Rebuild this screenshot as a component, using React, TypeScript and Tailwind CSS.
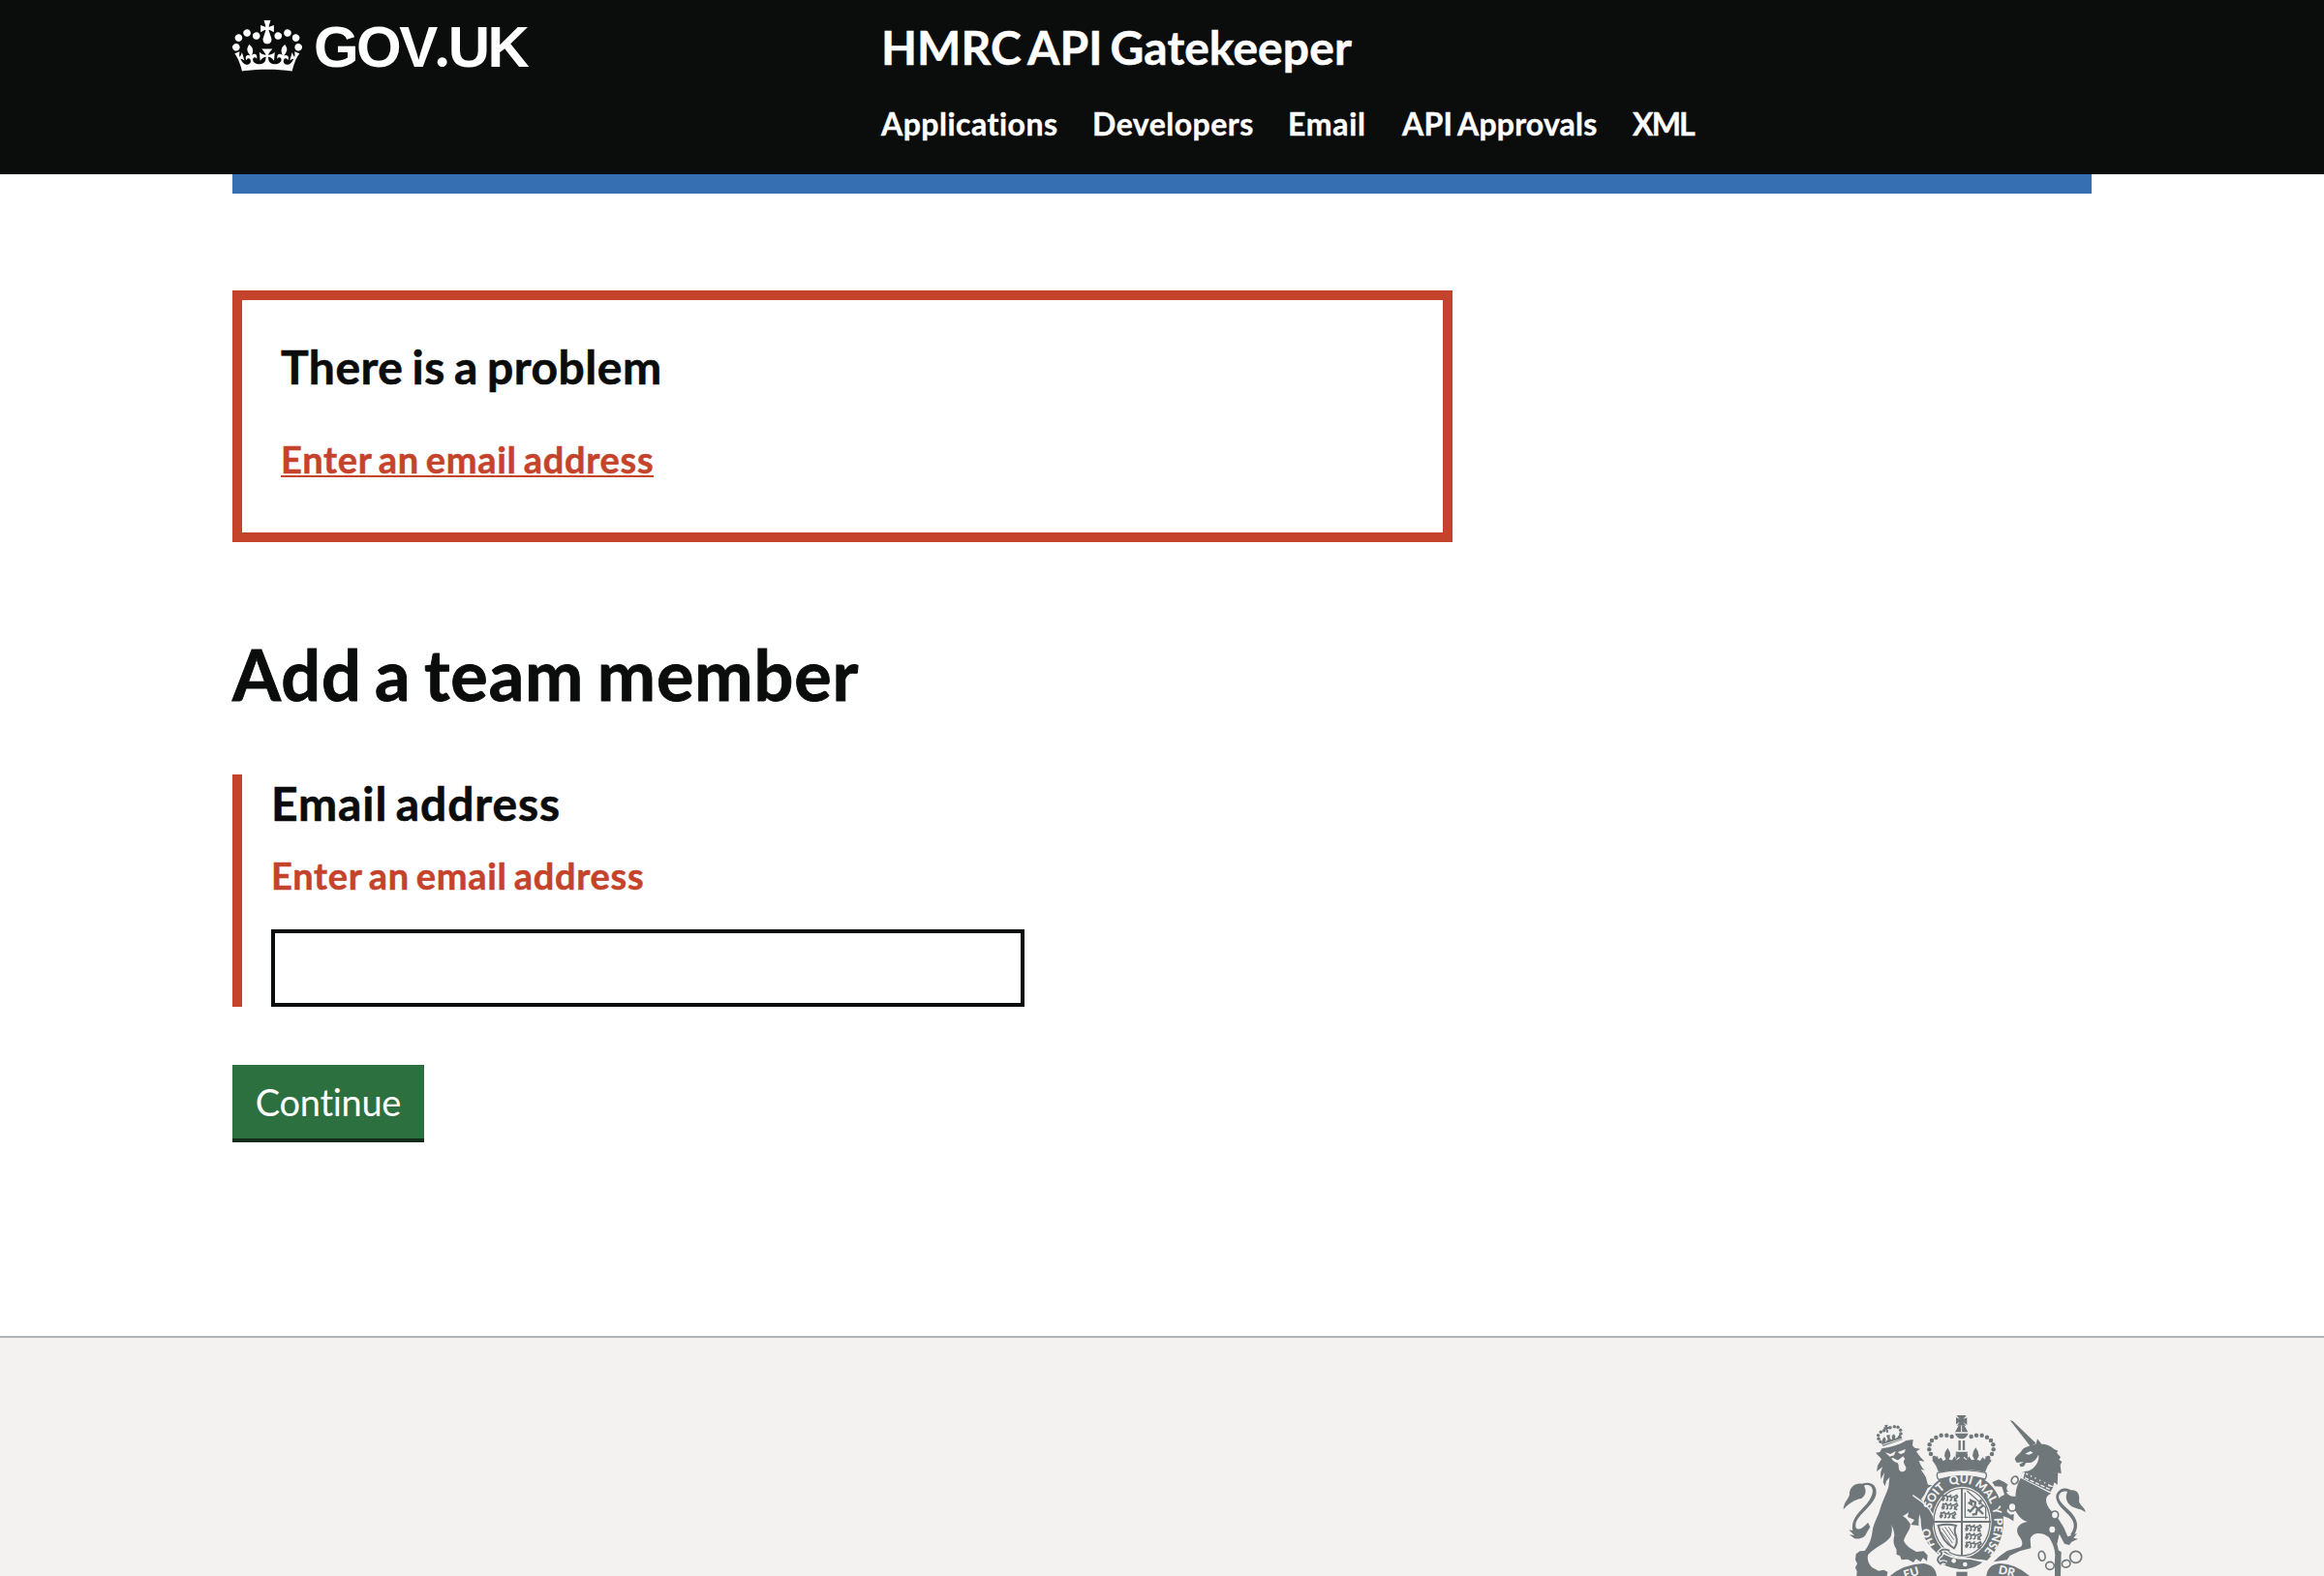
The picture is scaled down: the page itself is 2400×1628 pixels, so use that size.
const navItems = [
  { label: 'Applications', box: 'w-[218px] tracking-[0.5px]' },
  { label: 'Developers', box: 'w-[202px] tracking-[0.5px]' },
  { label: 'Email', box: 'w-[118px] tracking-[0.7px]' },
  { label: 'API Approvals', box: 'w-[238px] tracking-[0.2px] [word-spacing:-2px]' },
  { label: 'XML', box: 'tracking-[-1.8px]' },
];

function Crown({ className }: { className?: string }) {
  return (
    <svg className={className} viewBox="0 0 132 97" fill="currentColor" aria-hidden="true">
      <path d="M25 30.2c3.5 1.5 7.7-.2 9.1-3.7 1.5-3.6-.2-7.8-3.9-9.2-3.6-1.4-7.6.3-9.1 3.9-1.4 3.5.3 7.5 3.9 9zM9 39.5c3.6 1.5 7.8-.2 9.2-3.7 1.5-3.6-.2-7.8-3.9-9.1-3.6-1.5-7.6.2-9.1 3.8-1.4 3.5.3 7.5 3.8 9zM4.4 57.2c3.5 1.5 7.7-.2 9.1-3.8 1.5-3.6-.2-7.7-3.9-9.1-3.5-1.5-7.6.3-9.1 3.8-1.4 3.5.3 7.6 3.9 9.1zm38.3-21.4c3.5 1.5 7.7-.2 9.1-3.8 1.5-3.6-.2-7.7-3.9-9.1-3.6-1.5-7.6.3-9.1 3.8-1.3 3.6.4 7.7 3.9 9.1zm64.4-5.6c-3.6 1.5-7.8-.2-9.1-3.7-1.5-3.6.2-7.8 3.8-9.2 3.6-1.4 7.7.3 9.2 3.9 1.3 3.5-.4 7.5-3.9 9zm15.9 9.3c-3.6 1.5-7.7-.2-9.1-3.7-1.5-3.6.2-7.8 3.7-9.1 3.6-1.5 7.7.2 9.2 3.8 1.5 3.5-.3 7.5-3.8 9zm4.7 17.7c-3.6 1.5-7.8-.2-9.2-3.8-1.5-3.6.2-7.7 3.9-9.1 3.6-1.5 7.7.3 9.2 3.8 1.3 3.5-.4 7.6-3.9 9.1zM89.3 35.8c-3.6 1.5-7.8-.2-9.2-3.8-1.4-3.6.2-7.7 3.9-9.1 3.6-1.5 7.7.3 9.2 3.8 1.4 3.6-.3 7.7-3.9 9.1zM69.7 17.7l8.9 4.7V9.3l-8.9 2.8c-.2-.3-.5-.6-.9-.9L72.4 0H59.6l3.5 11.2c-.3.3-.6.5-.9.9l-8.8-2.8v13.1l8.8-4.7c.3.3.6.7.9.9l-5 15.4v.1c-.2.8-.4 1.6-.4 2.4 0 4.1 3.1 7.5 7 8.1h.2c.3 0 .7.1 1 .1.4 0 .7 0 1-.1h.2c4-.6 7.1-4.1 7.1-8.1 0-.8-.1-1.7-.4-2.4V34l-5.1-15.4c.4-.2.7-.6 1-.9zM66 92.8c16.9 0 32.8 1.1 47.1 3.2 4-16.9 8.9-26.7 14-33.5l-9.6-3.4c1 4.9 1.1 7.2 0 10.2-1.5-1.4-3-4.3-4.2-8.7L108.6 76c2.8-2 5-3.2 7.5-3.3-4.4 9.4-10 11.9-13.6 11.2-4.3-.8-6.3-4.6-5.6-7.9 1-4.7 5.7-5.9 8-.5 4.3-8.7-3-11.4-7.6-8.8 7.1-7.2 7.9-13.5 2.1-21.1-8 6.1-8.1 12.3-4.5 20.8-4.7-5.4-12.1-2.5-9.5 6.2 3.4-5.2 7.9-2 7.2 3.1-.6 4.3-6.4 7.8-13.5 7.2-10.3-.9-10.9-8-11.2-13.8 2.5-.5 7.1 1.8 11 7.3L80.2 60c-4.1 4.4-8 5.3-12.3 5.4 1.4-4.4 8-11.6 8-11.6H55.5s6.4 7.2 7.9 11.6c-4.2-.1-8-1-12.3-5.4l1.4 16.4c3.9-5.5 8.5-7.7 10.9-7.3-.3 5.8-.9 12.8-11.1 13.8-7.2.6-12.9-2.9-13.5-7.2-.7-5 3.8-8.3 7.1-3.1 2.7-8.7-4.6-11.6-9.4-6.2 3.7-8.5 3.6-14.7-4.6-20.8-5.8 7.6-5 13.9 2.2 21.1-4.7-2.6-11.9.1-7.7 8.8 2.3-5.5 7.1-4.2 8.1.5.7 3.3-1.3 7.1-5.7 7.9-3.5.7-9-1.8-13.5-11.2 2.5.1 4.7 1.3 7.5 3.3l-4.7-15.4c-1.2 4.4-2.7 7.2-4.3 8.7-1.1-3-.9-5.3 0-10.2l-9.5 3.4c5 6.9 9.9 16.7 14 33.5 14.8-2.1 30.8-3.2 47.7-3.2z" />
    </svg>
  );
}

const INK = '#6f777b';
const PAPER = '#f3f2f1';

// Small heraldic lion used in the shield's quarters.
function Charge({ x, y }: { x: number; y: number }) {
  return (
    <path
      transform={`translate(${x} ${y})`}
      d="M2 16c5-3 6-8 3-13M5 3l7 2 4-3 3 5 8-1 7 3 9-3 6-4 3 6-5 4-2 8 6 1M12 10l-4 8-5 1M20 9l1 9-5 2M34 10l-2 8-5 2M42 10l2 8-4 2M26 8l6-7"
      fill="none"
      stroke={INK}
      strokeWidth="5"
      strokeLinejoin="round"
    />
  );
}

function CoatOfArms({ className }: { className?: string }) {
  const beads: [number, number][] = [
    [377, 132], [361, 128], [344, 128], [328, 135], [315, 144], [308, 157], [307, 172], [312, 186], [323, 198],
    [437, 132], [453, 128], [470, 128], [486, 134], [498, 144], [505, 157], [506, 172], [501, 186], [490, 198],
  ];
  const smallBeads: [number, number][] = [
    [149, 128], [150, 139], [156, 148], [157, 118], [167, 113], [186, 104], [199, 101], [210, 103], [218, 112], [219, 123], [216, 134],
  ];
  return (
    <svg className={className} viewBox="0 0 840 564" fill={INK} aria-hidden="true">
      {/* lion tail */}
      <path d="M98 278C130 268 147 285 142 312C136 345 82 375 79 405C77 424 94 425 117 398L124 412L112 432C108 444 92 452 74 447L60 436L75 438L58 421L70 423C64 385 92 365 115 338C136 312 137 289 120 283C113 281 106 283 105 285C115 300 108 318 96 324C75 328 56 340 41 358C43 335 56 326 60 312C58 295 72 275 98 278Z" />
      {/* lion body */}
      <path d="M141 182L154 180L160 169C190 164 215 157 236 144L257 141L255 160L262 167L279 170L267 178C275 190 282 200 293 209L275 206C279 218 284 228 293 236L281 233C288 246 298 255 299 268L303 281L316 283L302 292L292 312L282 326L300 350L317 376L322 397L318 419L308 406L300 425L292 411L278 428L275 408L250 405L261 390L240 381L243 367L226 378L208 370C224 376 238 385 248 402C251 419 233 435 228 455C236 472 252 480 268 489L290 487L302 500L300 518L288 508L280 520L266 511L258 522L240 512L221 514L216 501L206 498L205 480C195 466 195 452 199 438C199 428 195 417 190 404C193 420 191 433 187 443C170 465 137 475 118 497C112 513 121 527 129 537L150 548L166 545L178 551L176 564H82L83 550L78 538L84 526L78 514L80 496L92 487L107 486C121 468 128 449 131 425C134 402 146 384 153 363C160 335 172 316 181 288L184 258L174 270L170 286L164 274L168 244L157 264L156 245L162 226L144 240L147 222L159 202L154 196Z" />
      <path d="M170 181L187 186L203 177L198 190L185 194ZM209 180L233 171L231 181L219 187ZM190 199C198 195 203 207 212 204L226 193L232 202C223 209 230 217 235 227C236 237 228 243 219 240C209 234 215 223 210 215C205 210 196 213 190 199Z" fill={PAPER} />
      {/* lion crown */}
      <g>
        {smallBeads.map(([x, y]) => <circle key={`${x}-${y}`} cx={x} cy={y} r="5.2" />)}
        <path d="M168 97L179 95L177 102L184 101L184 109L178 108L181 119L174 119L173 110L167 111L166 103L171 103Z" />
        <path d="M154 145L162 152L162 140L168 132L173 141L171 149L179 141L174 128L185 126L185 138L192 142L191 130L198 124L202 131L201 139L208 135L216 123L224 141L164 162Z" />
        <path d="M163 157Q190 149 224 138" fill="none" stroke={PAPER} strokeWidth="2.5" />
      </g>

      {/* royal crown */}
      <g>
        <path d="M392 66H422L413 78L424 73V96L413 87L421 98H393L401 87L390 94V72L401 78Z" />
        <path d="M398 98H416L427 118H387Z" />
        <path d="M387 122H428Q422 138 408 139Q392 138 387 122Z" />
        <path d="M407 98V118" stroke={PAPER} strokeWidth="3" />
        <path d="M401 144V174M414 144V174" stroke={INK} strokeWidth="7" />
        {beads.map(([x, y]) => <circle key={`${x}-${y}`} cx={x} cy={y} r="6.7" />)}
        <path d="M316 205L333 192L335 202L344 197L350 208L359 202L354 192Q354 179 364 167Q373 179 373 191L368 203L378 205L385 193L392 205L402 198L388 179H427L413 198L423 205L430 193L438 205L447 203L441 191Q441 178 451 166Q461 179 461 191L455 203L465 207L472 196L480 203L482 192L500 206Q486 221 480 242Q408 227 336 242Q330 222 316 205Z" />
        <path d="M389 183L402 193L389 204ZM426 183L413 193L426 204Z" />
        <path d="M333 244Q408 228 482 244Q487 254 480 264Q408 244 336 265Q328 256 333 244Z" fill={PAPER} stroke={INK} strokeWidth="4" />
      </g>

      {/* garter */}
      <ellipse cx="408" cy="402" rx="134" ry="150" fill={PAPER} />
      <path d="M340 264Q408 240 476 264Q536 305 537 392Q537 466 486 516Q452 508 430 516L340 500Q280 455 281 390Q284 305 340 264Z" />
      <ellipse cx="408" cy="397" rx="92" ry="110" fill={PAPER} />
      <ellipse cx="408" cy="397" rx="87" ry="104" fill="none" stroke={INK} strokeWidth="4" />
      <path d="M408 292V500M318 396H498" stroke={INK} strokeWidth="6" />
      <Charge x={343} y={311} />
      <Charge x={343} y={337} />
      <Charge x={337} y={364} />
      <Charge x={416} y={404} />
      <Charge x={416} y={430} />
      <Charge x={416} y={456} />
      <path d="M418 305V382H488M424 300L482 352V388" fill="none" stroke={INK} strokeWidth="4" />
      <path d="M428 336L438 342L436 330L450 336L448 348L460 356L474 345M448 348L434 364L426 358M456 356L452 372L440 374M460 358L474 372M462 342L468 328" fill="none" stroke={INK} strokeWidth="7" />
      <path d="M335 408Q360 400 390 408Q382 420 390 440Q397 462 384 478Q346 458 335 408Z" fill="none" stroke={INK} strokeWidth="6" />
      <path d="M347 416L379 462M356 412L383 452M367 412L386 440M345 428L374 469" stroke={INK} strokeWidth="3" />
      {/* lion forepaw over the garter */}
      <path d="M258 316L284 336L304 356L318 377L322 397L316 416L308 404L296 414L284 396Z" />
      <path d="M256 314C280 331 302 342 319 376" fill="none" stroke={PAPER} strokeWidth="4" />
      <path id="garter-path" d="M408 520A101 122 0 0 1 408 276A101 122 0 0 1 408 520" fill="none" />
      <g fill={PAPER} className="font-['Lato'] text-[36px] font-black" textAnchor="middle">
        <text><textPath href="#garter-path" startOffset="18.6%">HO</textPath></text>
        <text><textPath href="#garter-path" startOffset="36.5%">SOIT</textPath></text>
        <text><textPath href="#garter-path" startOffset="49.5%">QUI</textPath></text>
        <text><textPath href="#garter-path" startOffset="61.2%">MAL</textPath></text>
        <text><textPath href="#garter-path" startOffset="70%">Y</textPath></text>
        <text><textPath href="#garter-path" startOffset="81%">PENSE</textPath></text>
      </g>
      {/* buckle and strap */}
      <path d="M340 486Q372 512 432 510L478 520Q440 550 398 545Q354 538 334 520Z" stroke={PAPER} strokeWidth="5" />
      <path d="M370 486Q350 476 340 488Q352 494 338 504Q326 514 342 526Q348 516 360 524" fill="none" stroke={PAPER} strokeWidth="13" />
      <path d="M370 486Q350 476 340 488Q352 494 338 504Q326 514 342 526Q348 516 360 524" fill="none" stroke={INK} strokeWidth="6" />
      <circle cx="383" cy="517" r="7" fill={PAPER} />
      <circle cx="418" cy="528" r="7" fill={PAPER} />
      <path d="M391 551H425V564H391Z" />

      {/* motto scroll */}
      <path d="M185 564Q226 528 288 525Q326 530 330 564Z" />
      <path d="M484 564Q488 528 526 525Q576 526 618 564Z" />
      <g fill={PAPER} className="font-['Lato'] text-[36px] font-black">
        <text transform="translate(232 573) rotate(-17)">EU</text>
        <text transform="translate(520 556) rotate(12)">DR</text>
      </g>

      {/* unicorn */}
      <path d="M557 81L566 84L638 153L620 162Z" />
      <path d="M620 160L638 155L642 139L655 155C674 155 686 163 694 171L706 176L702 182L714 196L709 203L718 210L713 220L716 247L706 244L704 281L694 274L690 290C668 282 626 262 597 240C610 240 625 236 634 224C645 213 648 198 645 188C638 206 626 215 607 213L600 224L590 226L586 218L600 210L578 213L572 202C575 192 586 187 594 175C602 164 610 165 620 160Z" />
      <path d="M604 185L620 177L629 182L616 188Z" fill={PAPER} />
      <path d="M590 262L597 239C622 254 660 276 690 286L683 310C660 318 668 348 690 366C702 378 714 397 724 414L736 442L765 432L754 446L768 449L748 458L741 468L726 464L710 434L703 465L708 485L716 489L714 564H696V512C700 486 690 463 678 444C662 430 627 424 620 450L622 478L589 486L557 501L548 514L506 520L524 503L548 486L590 474C600 466 594 450 583 437C574 420 580 401 612 396C592 390 584 378 572 359C561 352 546 352 548 365L558 374L569 372L568 394L552 384L534 378L529 344L515 343L529 322L552 330L575 328C572 300 582 276 590 262Z" />
      <path d="M502 273L522 265L540 273L552 282C562 290 560 299 546 304C551 315 562 318 577 318L574 334L548 330L532 347L524 338L518 360L513 337L528 318L540 312L532 287L510 286Z" />
      <path d="M597 240L693 287L683 308L590 260Z" fill={PAPER} />
      <path d="M604 240L609 252L619 245L622 258L632 250L635 264L646 257L649 271L660 263L664 278L674 271L676 286L691 289L682 303L598 262Z" />
      <path d="M603 260L680 295" stroke={PAPER} strokeWidth="4" strokeDasharray="13 5" />
      {/* unicorn tail */}
      <path d="M745 434C770 400 744 380 720 356C698 333 693 312 710 299C721 290 735 292 746 298C768 296 774 314 771 333C775 347 788 350 792 367C776 354 756 356 744 345C731 334 728 318 735 303C718 298 706 310 709 324C716 344 744 359 757 381C772 406 764 424 751 447Z" />
      {/* chain */}
      <g fill="none" stroke={INK} strokeWidth="5">
        <ellipse cx="572" cy="267" rx="10" ry="12" transform="rotate(25 572 267)" />
        <ellipse cx="564" cy="350" rx="12" ry="13" fill={PAPER} />
        <ellipse cx="696" cy="375" rx="11" ry="12" fill={PAPER} />
        <ellipse cx="656" cy="502" rx="10" ry="15" transform="rotate(-12 656 502)" />
        <ellipse cx="681" cy="532" rx="13" ry="12" />
        <ellipse cx="731" cy="526" rx="13" ry="11" transform="rotate(-20 731 526)" />
        <circle cx="761" cy="505" r="18" />
      </g>
      <ellipse cx="553" cy="291" rx="6" ry="10" fill={PAPER} />
      <ellipse cx="688" cy="420" rx="9" ry="10" fill={PAPER} />
      <ellipse cx="665" cy="455" rx="9" ry="10" fill={PAPER} />
    </svg>
  );
}

export default function App() {
  return (
    <div className="flex h-[1628px] w-[2400px] flex-col overflow-hidden bg-white font-['Lato',sans-serif] text-[#0b0c0c] [font-variant-ligatures:none]">
      <header className="h-[180px] shrink-0 bg-[#0b0c0c] px-[240px] text-white">
        <div className="flex">
          <a className="flex w-[670px] items-start pt-[21px]">
            <Crown className="h-[53px] w-[72px]" />
            <span className="-mt-[3px] ml-[12px] font-['Liberation_Sans',sans-serif] text-[60px] leading-[56px] font-bold tracking-[-2.6px]">
              GOV<span className="font-['Lato'] font-black tracking-[-1px]">.</span>UK
            </span>
          </a>
          <div className="pt-[19px]">
            <div className="text-[48px] leading-[60px] font-bold tracking-[0.1px] [word-spacing:-4px] [-webkit-text-stroke:0.5px]">HMRC API Gatekeeper</div>
            <nav className="mt-[29px] flex text-[32px] leading-[40px] font-bold [-webkit-text-stroke:0.4px]">
              {navItems.map((n) => (
                <a key={n.label} className={n.box}>{n.label}</a>
              ))}
            </nav>
          </div>
        </div>
      </header>

      <div className="mx-[240px] h-[20px] shrink-0 bg-[#366fb2]" />

      <main className="h-[1180px] shrink-0 px-[240px] pt-[100px]">
        <section className="h-[260px] w-[1260px] border-[10px] border-[#c5422b] px-[40px] pt-[39px]">
          <h2 className="text-[48px] leading-[60px] font-bold tracking-[0.5px] [word-spacing:-3px] [-webkit-text-stroke:0.6px]">There is a problem</h2>
          <a className="mt-[41px] inline-block border-b-2 border-[#c5422b] text-[38px] leading-[49px] font-bold tracking-[0.7px] text-[#c5422b] [word-spacing:-3px] [-webkit-text-stroke:0.5px]">
            <span className="-mb-[8px] block">Enter an email address</span>
          </a>
        </section>

        <h1 className="mt-[96px] text-[72px] leading-[80px] font-bold tracking-[0.9px] [word-spacing:-5px] [-webkit-text-stroke:0.9px]">Add a team member</h1>

        <div className="mt-[64px] h-[240px] border-l-[10px] border-[#c5422b] pt-[2px] pl-[30px]">
          <h2 className="text-[48px] leading-[56px] font-bold tracking-[0.9px] [word-spacing:-4px] [-webkit-text-stroke:0.6px]">Email address</h2>
          <p className="mt-[21px] text-[38px] leading-[50px] font-bold tracking-[0.7px] text-[#c5422b] [word-spacing:-3px] [-webkit-text-stroke:0.5px]">Enter an email address</p>
          <input className="mt-[31px] block h-[80px] w-[778px] border-4 border-[#0b0c0c] bg-white outline-none" />
        </div>

        <button className="mt-[60px] block h-[80px] w-[198px] border-b-4 border-[#122d1c] bg-[#2d7040] text-[38px] leading-[76px] tracking-[-0.3px] text-white">
          Continue
        </button>
      </main>

      <footer className="flex flex-1 justify-end border-t-2 border-[#b1b4b6] bg-[#f3f2f1] pt-[58px] pr-[230px]">
        <CoatOfArms className="h-[188px] w-[280px] shrink-0" />
      </footer>
    </div>
  );
}
